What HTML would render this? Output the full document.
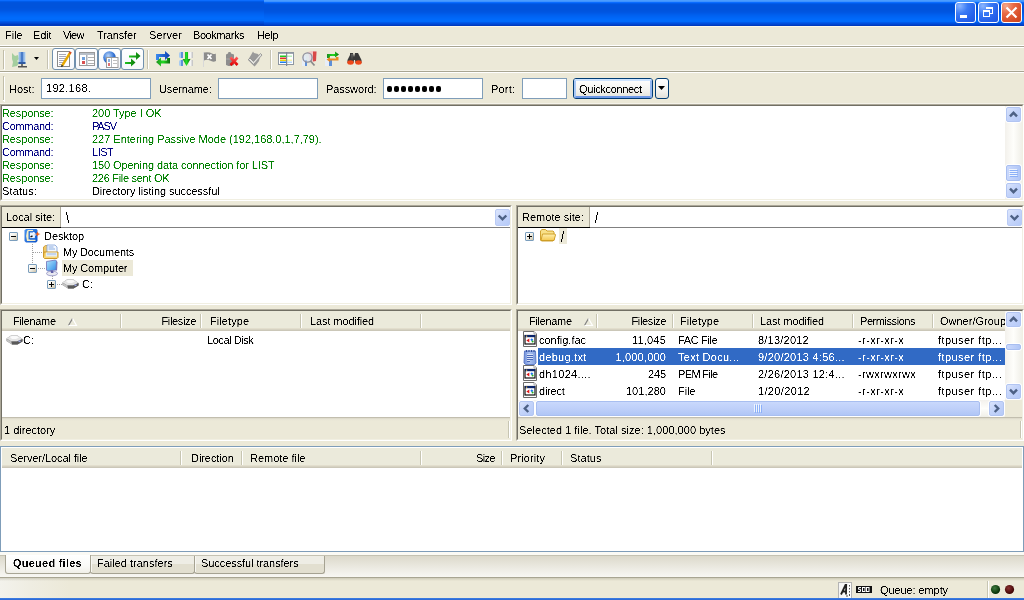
<!DOCTYPE html>
<html><head><meta charset="utf-8"><style>
*{box-sizing:border-box}
html,body{margin:0;padding:0}
body{width:1024px;height:600px;overflow:hidden;position:relative;background:#ECE9D8;font-family:"Liberation Sans",sans-serif;font-size:11px;color:#000;line-height:13px}
.a{position:absolute}
.t{position:absolute;white-space:pre;line-height:13px;filter:url(#crisp)}
.hdrsep{position:absolute;width:2px;border-left:1px solid #C7C5B2;border-right:1px solid #fff}
svg{position:absolute;overflow:visible}
</style></head><body>
<svg width="0" height="0" style="position:absolute"><filter id="crisp" x="0" y="0" width="100%" height="100%"><feComponentTransfer><feFuncA type="table" tableValues="0 0 1 1"/></feComponentTransfer></filter></svg>
<div class="a" style="left:0px;top:0px;width:1024px;height:26px;background:linear-gradient(#4A9CFF 0px,#4A9CFF 1px,#3D92FF 1px,#3D92FF 2px,#0A6CFF 2px,#0A6CFF 3px,#005CEB 3px,#005CEB 4px,#0054DE 4px,#0054DE 5px,#0053DC 5px,#0053DC 6px,#0053DC 6px,#0053DC 7px,#0053DC 7px,#0053DC 8px,#0053DC 8px,#0053DC 9px,#0053DC 9px,#0053DC 10px,#0054DE 10px,#0054DE 11px,#0055E0 11px,#0055E0 12px,#0057E3 12px,#0057E3 13px,#005AE8 13px,#005AE8 14px,#005EEC 14px,#005EEC 15px,#0061F0 15px,#0061F0 16px,#0063F4 16px,#0063F4 17px,#0066F6 17px,#0066F6 18px,#0068F9 18px,#0068F9 19px,#006AFB 19px,#006AFB 20px,#006BFC 20px,#006BFC 21px,#006AFA 21px,#006AFA 22px,#005AEA 22px,#005AEA 23px,#004FDD 23px,#004FDD 24px,#0046D0 24px,#0046D0 25px,#003BBE 25px,#003BBE 26px)"></div>
<div class="a" style="left:0px;top:0px;width:264px;height:26px;background:linear-gradient(#0A6CFF 0px,#0A6CFF 1px,#005CEB 1px,#005CEB 2px,#0054DE 2px,#0054DE 3px,#0053DC 3px,#0053DC 4px,#0053DC 4px,#0053DC 5px,#0053DC 5px,#0053DC 6px,#0053DC 6px,#0053DC 7px,#0053DC 7px,#0053DC 8px,#0054DE 8px,#0054DE 9px,#0055E0 9px,#0055E0 10px,#0057E3 10px,#0057E3 11px,#005AE8 11px,#005AE8 12px,#005EEC 12px,#005EEC 13px,#0061F0 13px,#0061F0 14px,#0063F4 14px,#0063F4 15px,#0066F6 15px,#0066F6 16px,#0068F9 16px,#0068F9 17px,#006AFB 17px,#006AFB 18px,#006BFC 18px,#006BFC 19px,#006AFA 19px,#006AFA 20px,#006AFA 20px,#006AFA 21px,#005AEA 21px,#005AEA 22px,#004FDD 22px,#004FDD 23px,#0046D0 23px,#0046D0 24px,#003BBE 24px,#003BBE 25px)"></div>
<div class="a" style="left:955px;top:2px;width:21px;height:21px;border:1px solid #fff;border-radius:3px;background:radial-gradient(circle at 20% 15%,#8CB6FF 0,#3B7BF5 35%,#2662EB 70%,#1E56E0 100%)"></div>
<div class="a" style="left:978px;top:2px;width:21px;height:21px;border:1px solid #fff;border-radius:3px;background:radial-gradient(circle at 20% 15%,#8CB6FF 0,#3B7BF5 35%,#2662EB 70%,#1E56E0 100%)"></div>
<div class="a" style="left:1001px;top:2px;width:21px;height:21px;border:1px solid #fff;border-radius:3px;background:radial-gradient(circle at 20% 15%,#F4A88B 0,#E86A45 35%,#D8502A 70%,#C8441F 100%)"></div>
<div class="a" style="left:960px;top:15px;width:7px;height:3px;background:#fff"></div>
<div class="a" style="left:986px;top:7px;width:7px;height:2px;background:#fff"></div>
<div class="a" style="left:992px;top:7px;width:1px;height:7px;background:#fff"></div>
<div class="a" style="left:990px;top:13px;width:3px;height:1px;background:#fff"></div>
<div class="a" style="left:983px;top:10px;width:7px;height:7px;border:1px solid #fff;border-top-width:2px;background:transparent"></div>
<svg style="left:1001px;top:2px" width="21" height="21"><path d="M5.5 5.5 L15.5 15.5 M15.5 5.5 L5.5 15.5" stroke="#fff" stroke-width="2.2"/></svg>
<div class="a" style="left:0px;top:26px;width:1024px;height:1px;background:#FBF8EA"></div>
<div class="t" style="left:5px;top:29px;;letter-spacing:-0.08px">File</div>
<div class="t" style="left:33px;top:29px;;letter-spacing:-0.17px">Edit</div>
<div class="t" style="left:63px;top:29px;;letter-spacing:-0.75px">View</div>
<div class="t" style="left:97px;top:29px;;letter-spacing:-0.14px">Transfer</div>
<div class="t" style="left:149px;top:29px;;letter-spacing:0.1px">Server</div>
<div class="t" style="left:193px;top:29px;;letter-spacing:-0.44px">Bookmarks</div>
<div class="t" style="left:257px;top:29px;;letter-spacing:-0.33px">Help</div>
<div class="a" style="left:0px;top:45px;width:1024px;height:1px;background:#fff"></div>
<div class="a" style="left:0px;top:46px;width:1024px;height:1px;background:#A8A592"></div>
<div class="a" style="left:0px;top:47px;width:1024px;height:1px;background:#fff"></div>
<div class="a" style="left:3px;top:50px;width:1px;height:19px;background:#C1BDA8"></div>
<div class="a" style="left:4px;top:51px;width:1px;height:19px;background:#fff"></div>
<div class="a" style="left:0px;top:70px;width:1024px;height:1px;background:#F4F2E8"></div>
<div class="a" style="left:0px;top:71px;width:1024px;height:1px;background:#A8A592"></div>
<div class="a" style="left:0px;top:72px;width:1024px;height:1px;background:#fff"></div>
<div class="a" style="left:47px;top:50px;width:1px;height:19px;background:#C5C2B2"></div>
<div class="a" style="left:48px;top:50px;width:1px;height:19px;background:#fff"></div>
<div class="a" style="left:147px;top:50px;width:1px;height:19px;background:#C5C2B2"></div>
<div class="a" style="left:148px;top:50px;width:1px;height:19px;background:#fff"></div>
<div class="a" style="left:270px;top:50px;width:1px;height:19px;background:#C5C2B2"></div>
<div class="a" style="left:271px;top:50px;width:1px;height:19px;background:#fff"></div>
<div class="a" style="left:52px;top:48px;width:23px;height:22px;border:1px solid #7090AE;border-radius:3px;background:linear-gradient(#fff,#F6F8FB)"></div>
<div class="a" style="left:75px;top:48px;width:23px;height:22px;border:1px solid #7090AE;border-radius:3px;background:linear-gradient(#fff,#F6F8FB)"></div>
<div class="a" style="left:98px;top:48px;width:23px;height:22px;border:1px solid #7090AE;border-radius:3px;background:linear-gradient(#fff,#F6F8FB)"></div>
<div class="a" style="left:121px;top:48px;width:23px;height:22px;border:1px solid #7090AE;border-radius:3px;background:linear-gradient(#fff,#F6F8FB)"></div>

<svg style="left:0;top:0" width="400" height="75">
<defs>
<linearGradient id="gBlueV" x1="0" y1="0" x2="1" y2="0"><stop offset="0" stop-color="#A9CBEF"/><stop offset="0.5" stop-color="#5E8FD6"/><stop offset="1" stop-color="#B8D6F2"/></linearGradient>
<linearGradient id="gGreenA" x1="0" y1="0" x2="1" y2="0"><stop offset="0" stop-color="#22C622"/><stop offset="1" stop-color="#0A7A0A"/></linearGradient>
<linearGradient id="gGreenB" x1="0" y1="0" x2="1" y2="0"><stop offset="0" stop-color="#1E8A1E"/><stop offset="0.5" stop-color="#22DD22"/><stop offset="1" stop-color="#0B6A0B"/></linearGradient>
<linearGradient id="gBlueA" x1="0" y1="0" x2="1" y2="0"><stop offset="0" stop-color="#3C8CF0"/><stop offset="1" stop-color="#0A3CB0"/></linearGradient>
<radialGradient id="gGlobe" cx="0.4" cy="0.35" r="0.7"><stop offset="0" stop-color="#B8D4F8"/><stop offset="0.6" stop-color="#3C7AD8"/><stop offset="1" stop-color="#1546A8"/></radialGradient>
<linearGradient id="gRedX" x1="0" y1="0" x2="0" y2="1"><stop offset="0" stop-color="#FF5A5A"/><stop offset="1" stop-color="#E00000"/></linearGradient>
</defs>
<!-- site manager -->
<path d="M12 53 L15 56 L18 55 L19 59 L17 61 L19 63 L17 66 L12 67 L13 62 L12 59 Z" fill="#9CCB98" opacity="0.9"/>
<rect x="18.5" y="52" width="7" height="12" fill="url(#gBlueV)"/>
<rect x="21" y="52" width="2" height="12" fill="#4A7CC8"/>
<rect x="18.5" y="62" width="7" height="2" fill="#2F5AA0"/>
<rect x="21" y="64" width="2" height="2" fill="#707070"/>
<rect x="18" y="66" width="9" height="1.5" fill="#505050"/>
<path d="M34 57 H39 L36.5 60 Z" fill="#000"/>
<!-- log icon -->
<rect x="57.5" y="51.5" width="12" height="15" fill="#fff" stroke="#8A8A8A"/>
<g stroke="#A8A8B8" stroke-width="1"><path d="M59 54.5 H66 M59 56.5 H66 M59 58.5 H66 M59 60.5 H65 M59 62.5 H64 M59 64.5 H63"/></g>
<path d="M62 66 L70 53" stroke="#E8A800" stroke-width="2.4"/>
<path d="M69.3 52.2 L71.2 53.4" stroke="#D84A20" stroke-width="2"/>
<path d="M61.5 66.8 L62.4 65.2" stroke="#333" stroke-width="1.5"/>
<!-- local tree icon -->
<rect x="79.5" y="52.5" width="15" height="13" fill="#fff" stroke="#9A9A9A"/>
<rect x="80" y="53" width="14" height="2" fill="#B8BFC8"/>
<rect x="86" y="55" width="1.5" height="10" fill="#A8B0BA"/>
<rect x="82" y="57" width="3" height="3" fill="#6EA0DC"/>
<rect x="82" y="61" width="3" height="3" fill="#D85050"/>
<g stroke="#B0B0B0"><path d="M88 57.5 H94 M88 60.5 H94 M88 63.5 H94"/></g>
<!-- remote tree icon -->
<circle cx="109.5" cy="57.5" r="6.3" fill="url(#gGlobe)"/>
<rect x="106.5" y="57.5" width="11.5" height="10" fill="#fff" stroke="#9A9A9A"/>
<rect x="111" y="58" width="1" height="9" fill="#B0B8C0"/>
<rect x="108" y="59" width="2" height="3" fill="#8CB0E0"/>
<rect x="108" y="63" width="2" height="3" fill="#E07070"/>
<g stroke="#C0C0C0"><path d="M113 60.5 H117 M113 63.5 H117"/></g>
<!-- queue arrows -->
<path d="M129 55.5 H136 V52 L140.5 56 L136 60 V57.5 H129 Z" fill="url(#gGreenA)"/>
<path d="M125 62 H131 V58.5 L135.5 62.5 L131 66.5 V64 H125 Z" fill="url(#gGreenA)"/>
<!-- refresh -->
<path d="M156 54 H165 V51 L170 55.5 L165 60 V57 H159 V60 L156 60 Z" fill="url(#gBlueA)"/>
<path d="M170 58 V63.5 H161 V66.5 L156 62 L161 57.5 V60.5 H167 V58 Z" fill="url(#gGreenB)"/>
<!-- process queue -->
<rect x="179" y="52" width="4" height="6" rx="1.5" fill="#A8CCF0"/><rect x="181" y="52" width="2" height="6" fill="#5E90D8"/>
<rect x="179" y="60" width="4" height="6" rx="1.5" fill="#A8CCF0"/><rect x="181" y="60" width="2" height="6" fill="#5E90D8"/>
<rect x="189" y="52" width="4" height="6" rx="1.5" fill="#F4F4F4"/><rect x="191.5" y="52" width="1.5" height="6" fill="#C8C8C8"/>
<rect x="189" y="60" width="4" height="6" rx="1.5" fill="#F4F4F4"/><rect x="191.5" y="60" width="1.5" height="6" fill="#C8C8C8"/>
<path d="M185 52 H188 V59 H190.5 L186.5 66 L182.5 59 H185 Z" fill="url(#gGreenB)"/>
<!-- cancel flag -->
<path d="M203.5 52 V67" stroke="#D8D8D8" stroke-width="1"/>
<path d="M204 52.5 Q209 51.5 212 53.5 Q214.5 54.5 215.8 53.5 L216 61 Q213 62.5 210 60.5 Q207 59 204 60.5 Z" fill="#8C8C8C"/>
<path d="M207.5 54.5 L211.5 59 M211.5 54.5 L207.5 59" stroke="#fff" stroke-width="1.8"/>
<!-- disconnect -->
<path d="M228.5 52 H230.5 L231 53.5 L234 54.5 V65 L231 66 H228.5 L226 65 V54.5 L228 53.5 Z" fill="#8E8E8E"/>
<path d="M226 59 H234" stroke="#A8A8A8"/>
<path d="M230.5 57.5 L237.5 65 M237.5 57.5 L230.5 65" stroke="url(#gRedX)" stroke-width="2.6"/>
<!-- reconnect -->
<path d="M253 51.5 L254 53 L258 54 L260 57 L259 61 L256 65 L254.5 66.5 L250 62 L248 60 L251 55 Z" fill="#9A9A9A"/>
<path d="M248.5 59.5 L253.5 64.5 L262 55 L260.5 53.5 L253.5 61.5 L250 58 Z" fill="#E2E2DE" stroke="#8C8C8C" stroke-width="0.8"/>
<!-- compare -->
<rect x="278.5" y="52.5" width="15" height="12" fill="#fff" stroke="#8E96A0"/>
<rect x="279" y="53" width="14" height="1" fill="#A0A8B2"/>
<rect x="280" y="55.5" width="6" height="1.5" fill="#20C820"/><rect x="287" y="55.5" width="5" height="1.5" fill="#B8ECB8"/>
<rect x="280" y="57.5" width="6" height="1.5" fill="#E03030"/>
<rect x="280" y="59.5" width="6" height="1.5" fill="#F0D000"/><rect x="287" y="59.5" width="5" height="1.5" fill="#F8F0A8"/>
<rect x="280" y="61.5" width="6" height="1.5" fill="#2080E8"/><rect x="287" y="61.5" width="5" height="1.5" fill="#B8D8F8"/>
<rect x="286" y="52" width="1.2" height="14" fill="#7E8894"/>
<!-- search -->
<path d="M308 52 L312 51 L316.5 51.5 L316 61 L310 62 Z" fill="#F0C8C8"/>
<path d="M313 51.5 L316.5 51.5 L316 61 L313 61.5 Z" fill="#D84848"/>
<path d="M302 57 L306 56 L306 66 L302 66 Z" fill="#E8EEF6"/>
<rect x="305" y="60" width="2" height="6" fill="#5E90D8"/>
<circle cx="307.5" cy="57.5" r="4.6" fill="#DCE8F8" fill-opacity="0.6" stroke="#8E8E9A" stroke-width="1.3"/>
<path d="M310.5 61 L314.5 65.5" stroke="#8A8A8A" stroke-width="1.8"/>
<!-- sync -->
<path d="M325 58 L329 56 L330 66 L325 66 Z" fill="#E8EEF8"/>
<rect x="329" y="60" width="3" height="6" fill="#5E90D8"/>
<path d="M327 54 H335 V51.5 L339 54.5 L335 57.5 V56 H330 V58 H327 Z" fill="url(#gGreenB)"/>
<path d="M338.5 57 V60.5 H330 V62 L326.5 59.5 L330 57 V58.5 H336 V57 Z" fill="#E88A20"/>
<!-- binoculars -->
<path d="M350 53 H353 L354 57 L355 53 H358 L359 55 L361.5 60 V63 H355.5 L355 60 H354 L353.5 63 H347.5 V60 L350 55 Z" fill="#3A3A3A"/>
<path d="M351 54 L353 54 L352 60 Z" fill="#606060"/>
<ellipse cx="350.5" cy="62.5" rx="3.2" ry="2.2" fill="#F04818"/>
<ellipse cx="358.5" cy="62.5" rx="3.2" ry="2.2" fill="#F04818"/>
</svg>

<div class="a" style="left:3px;top:76px;width:1px;height:25px;background:#C1BDA8"></div>
<div class="a" style="left:4px;top:77px;width:1px;height:25px;background:#fff"></div>
<div class="a" style="left:3px;top:100px;width:2px;height:1px;background:#fff"></div>
<div class="a" style="left:0px;top:103px;width:1024px;height:1px;background:#F5F3EA"></div>
<div class="t" style="left:9px;top:83px;">Host:</div>
<div class="a" style="left:41px;top:78px;width:110px;height:21px;border:1px solid #7F9DB9;background:#fff"></div>
<div class="t" style="left:46px;top:82px;;letter-spacing:0.29px">192.168.</div>
<div class="t" style="left:159px;top:83px;;letter-spacing:-0.12px">Username:</div>
<div class="a" style="left:218px;top:78px;width:100px;height:21px;border:1px solid #7F9DB9;background:#fff"></div>
<div class="t" style="left:326px;top:83px;;letter-spacing:-0.1px">Password:</div>
<div class="a" style="left:383px;top:78px;width:100px;height:21px;border:1px solid #7F9DB9;background:#fff"></div>
<div class="a" style="left:387px;top:86px;width:5px;height:6px;border-radius:2px;background:#000"></div>
<div class="a" style="left:394px;top:86px;width:5px;height:6px;border-radius:2px;background:#000"></div>
<div class="a" style="left:401px;top:86px;width:5px;height:6px;border-radius:2px;background:#000"></div>
<div class="a" style="left:408px;top:86px;width:5px;height:6px;border-radius:2px;background:#000"></div>
<div class="a" style="left:415px;top:86px;width:5px;height:6px;border-radius:2px;background:#000"></div>
<div class="a" style="left:422px;top:86px;width:5px;height:6px;border-radius:2px;background:#000"></div>
<div class="a" style="left:429px;top:86px;width:5px;height:6px;border-radius:2px;background:#000"></div>
<div class="a" style="left:436px;top:86px;width:5px;height:6px;border-radius:2px;background:#000"></div>
<div class="t" style="left:491px;top:83px;;letter-spacing:0.2px">Port:</div>
<div class="a" style="left:522px;top:78px;width:45px;height:21px;border:1px solid #7F9DB9;background:#fff"></div>
<div class="a" style="left:573px;top:78px;width:80px;height:21px;border:1px solid #003C74;border-radius:3px;background:linear-gradient(#FFFFFF,#F3F3EF 60%,#E2E1DA)"></div>
<div class="a" style="left:574px;top:79px;width:78px;height:19px;border:2px solid #B9D3F8;border-radius:2px;border-top-color:#CEE4FF;border-bottom-color:#6D98E6;border-right-color:#95B8F0;border-left-color:#A9C8F5"></div>
<div class="t" style="left:579px;top:83px;;letter-spacing:-0.33px">Quickconnect</div>
<div class="a" style="left:655px;top:78px;width:14px;height:21px;border:1px solid #003C74;border-radius:3px;background:linear-gradient(#FFFFFF,#F3F3EF 60%,#E2E1DA)"></div>
<svg style="left:658px;top:86px" width="8" height="5"><path d="M0 0 H7 L3.5 4 Z" fill="#000"/></svg>
<div class="a" style="left:0px;top:104px;width:1024px;height:97px;border-top:1px solid #ACA899;border-left:1px solid #ACA899;border-right:1px solid #fff;border-bottom:1px solid #fff"></div>
<div class="a" style="left:1px;top:105px;width:1022px;height:95px;border-top:1px solid #716F64;border-left:1px solid #716F64;border-right:1px solid #F1EFE2;border-bottom:1px solid #F1EFE2;background:#fff"></div>
<div class="t" style="left:2px;top:107px;color:#008000;letter-spacing:-0.12px">Response:</div>
<div class="t" style="left:92px;top:107px;color:#008000;letter-spacing:-0.05px">200 Type I OK</div>
<div class="t" style="left:2px;top:120px;color:#000080;letter-spacing:-0.31px">Command:</div>
<div class="t" style="left:92px;top:120px;color:#000080;letter-spacing:-1.17px">PASV</div>
<div class="t" style="left:2px;top:133px;color:#008000;letter-spacing:-0.12px">Response:</div>
<div class="t" style="left:92px;top:133px;color:#008000;letter-spacing:-0.02px">227 Entering Passive Mode (192,168,0,1,7,79).</div>
<div class="t" style="left:2px;top:146px;color:#000080;letter-spacing:-0.31px">Command:</div>
<div class="t" style="left:92px;top:146px;color:#000080;letter-spacing:-0.47px">LIST</div>
<div class="t" style="left:2px;top:159px;color:#008000;letter-spacing:-0.12px">Response:</div>
<div class="t" style="left:92px;top:159px;color:#008000;letter-spacing:-0.09px">150 Opening data connection for LIST</div>
<div class="t" style="left:2px;top:172px;color:#008000;letter-spacing:-0.12px">Response:</div>
<div class="t" style="left:92px;top:172px;color:#008000;letter-spacing:-0.29px">226 File sent OK</div>
<div class="t" style="left:2px;top:185px;color:#000;letter-spacing:0.13px">Status:</div>
<div class="t" style="left:92px;top:185px;color:#000;letter-spacing:-0.07px">Directory listing successful</div>
<div class="a" style="left:1005px;top:106px;width:17px;height:93px;background:linear-gradient(90deg,#F3F1EC,#FEFEFB 50%,#F0EFE8)"></div>
<div class="a" style="left:1005px;top:106px;width:17px;height:17px;border:1px solid #fff;border-radius:3px;background:#fff"></div><div class="a" style="left:1006px;top:107px;width:15px;height:15px;border:1px solid #B2C5F2;border-radius:2px;background:linear-gradient(135deg,#DAE4FC 0%,#C4D4FA 45%,#B6CAF8 100%)"></div><svg style="left:0;top:0" width="1" height="1"><path d="M1010.0 116.3 L1013.5 112.8 L1017.0 116.3" stroke="#4D6185" stroke-width="2.4" fill="none"/></svg>
<div class="a" style="left:1005px;top:164px;width:17px;height:18px;border:1px solid #fff;border-radius:3px;background:#fff"></div><div class="a" style="left:1006px;top:165px;width:15px;height:16px;border:1px solid #A8BEF0;border-radius:2px;background:linear-gradient(90deg,#C9D8FC,#BCCEF9 60%,#B0C6F6)"></div><div class="a" style="left:1009px;top:169px;width:8px;height:1px;background:#EEF4FE"></div><div class="a" style="left:1010px;top:170px;width:8px;height:1px;background:#8CB0F8"></div><div class="a" style="left:1009px;top:171px;width:8px;height:1px;background:#EEF4FE"></div><div class="a" style="left:1010px;top:172px;width:8px;height:1px;background:#8CB0F8"></div><div class="a" style="left:1009px;top:173px;width:8px;height:1px;background:#EEF4FE"></div><div class="a" style="left:1010px;top:174px;width:8px;height:1px;background:#8CB0F8"></div><div class="a" style="left:1009px;top:175px;width:8px;height:1px;background:#EEF4FE"></div><div class="a" style="left:1010px;top:176px;width:8px;height:1px;background:#8CB0F8"></div>
<div class="a" style="left:1005px;top:182px;width:17px;height:17px;border:1px solid #fff;border-radius:3px;background:#fff"></div><div class="a" style="left:1006px;top:183px;width:15px;height:15px;border:1px solid #B2C5F2;border-radius:2px;background:linear-gradient(135deg,#DAE4FC 0%,#C4D4FA 45%,#B6CAF8 100%)"></div><svg style="left:0;top:0" width="1" height="1"><path d="M1010.0 188.7 L1013.5 192.2 L1017.0 188.7" stroke="#4D6185" stroke-width="2.4" fill="none"/></svg>
<div class="a" style="left:0px;top:205px;width:512px;height:100px;border-top:1px solid #ACA899;border-left:1px solid #ACA899;border-right:1px solid #fff;border-bottom:1px solid #fff"></div>
<div class="a" style="left:1px;top:206px;width:510px;height:98px;border-top:1px solid #716F64;border-left:1px solid #716F64;border-right:1px solid #F1EFE2;border-bottom:1px solid #F1EFE2;background:#fff"></div>
<div class="a" style="left:2px;top:207px;width:59px;height:20px;background:#ECE9D8;border-right:1px solid #ACA899"></div>
<div class="a" style="left:2px;top:227px;width:59px;height:1px;background:#000"></div>
<div class="a" style="left:61px;top:227px;width:449px;height:1px;background:#808080"></div>
<div class="t" style="left:6px;top:211px;;letter-spacing:-0.05px">Local site:</div>
<div class="a" style="left:66px;top:212px;width:1px;height:3px;background:#000"></div>
<div class="a" style="left:67px;top:215px;width:1px;height:5px;background:#000"></div>
<div class="a" style="left:68px;top:220px;width:1px;height:3px;background:#000"></div>
<div class="a" style="left:495px;top:209px;width:15px;height:17px;border:1px solid #BACBF5;border-radius:2px;background:linear-gradient(135deg,#DCE6FD 0%,#C6D5FA 50%,#B5CAF8 100%)"></div><svg style="left:0;top:0" width="1" height="1"><path d="M498.7 215.5 L502.5 219.3 L506.3 215.5" stroke="#4D6185" stroke-width="2.4" fill="none"/></svg>
<div class="a" style="left:516px;top:205px;width:508px;height:100px;border-top:1px solid #ACA899;border-left:1px solid #ACA899;border-right:1px solid #fff;border-bottom:1px solid #fff"></div>
<div class="a" style="left:517px;top:206px;width:506px;height:98px;border-top:1px solid #716F64;border-left:1px solid #716F64;border-right:1px solid #F1EFE2;border-bottom:1px solid #F1EFE2;background:#fff"></div>
<div class="a" style="left:518px;top:207px;width:72px;height:20px;background:#ECE9D8;border-right:1px solid #ACA899"></div>
<div class="a" style="left:518px;top:227px;width:72px;height:1px;background:#000"></div>
<div class="a" style="left:590px;top:227px;width:432px;height:1px;background:#808080"></div>
<div class="t" style="left:522px;top:211px;;letter-spacing:0.02px">Remote site:</div>
<div class="a" style="left:597px;top:212px;width:1px;height:3px;background:#000"></div>
<div class="a" style="left:596px;top:215px;width:1px;height:5px;background:#000"></div>
<div class="a" style="left:595px;top:220px;width:1px;height:3px;background:#000"></div>
<div class="a" style="left:1007px;top:209px;width:15px;height:17px;border:1px solid #BACBF5;border-radius:2px;background:linear-gradient(135deg,#DCE6FD 0%,#C6D5FA 50%,#B5CAF8 100%)"></div><svg style="left:0;top:0" width="1" height="1"><path d="M1010.7 215.5 L1014.5 219.3 L1018.3 215.5" stroke="#4D6185" stroke-width="2.4" fill="none"/></svg>
<div class="a" style="left:9px;top:232px;width:9px;height:9px;border:1px solid #7B9EBD;border-radius:1px;background:linear-gradient(135deg,#fff 0%,#F4F2EA 45%,#C9C0A8 100%)"></div><div class="a" style="left:11px;top:236px;width:5px;height:1px;background:#000"></div>
<svg style="left:24px;top:228px" width="17" height="16">
<defs><linearGradient id="dk" x1="0" y1="0" x2="1" y2="1"><stop offset="0" stop-color="#4A94F0"/><stop offset="1" stop-color="#0A50C8"/></linearGradient></defs>
<path d="M2 1 H12.5 L13.5 2 V13 L12 14.5 H2 L0.5 13 V2.5 Z" fill="url(#dk)"/>
<path d="M4 2 H9 V4 H6 V11.5 H11.5 V13 H3 Q1.2 8 3 3 Z" fill="#F8F0C8"/>
<rect x="5.2" y="3.8" width="6.3" height="7" fill="#EAF4FE" stroke="#1A68D8" stroke-width="1.3"/>
<path d="M9 4 L12 6.5 L9 9.5" fill="none" stroke="#F4F8FE" stroke-width="1"/>
<path d="M6.5 9 L8.5 7.8" stroke="#101010" stroke-width="1.4"/>
<path d="M13.5 3.5 L14.5 5.5 L16.5 6 L14.5 6.8 L13.5 8.5 L12.8 6.8 L11 6 L12.8 5.3 Z" fill="#F06018"/>
</svg>
<div class="t" style="left:44px;top:230px;;letter-spacing:-0.03px">Desktop</div>
<div class="a" style="left:32px;top:244px;width:1px;height:24px;background:repeating-linear-gradient(#A0A0A0 0,#A0A0A0 1px,transparent 1px,transparent 2px)"></div>
<div class="a" style="left:33px;top:252px;width:10px;height:1px;background:repeating-linear-gradient(90deg,#A0A0A0 0,#A0A0A0 1px,transparent 1px,transparent 2px)"></div>
<svg style="left:43px;top:244px" width="16" height="15">
<path d="M0.5 3 L2.5 1.5 H5 V12.5 H0.5 Z" fill="#F0C868" stroke="#C8901C" stroke-width="0.8"/>
<path d="M4 1 H12 L14 3 V9 H4 Z" fill="#F4F8FE" stroke="#7E9ED8" stroke-width="0.8"/>
<path d="M5.5 3 H10.5 M5.5 5 H12" stroke="#7EA4E0" stroke-width="0.9"/>
<path d="M1 8 H15 V13.5 L14 14.5 H1.5 L0.5 13.5 Z" fill="#F8D878" stroke="#C8901C" stroke-width="0.9"/>
<rect x="3" y="8.5" width="11" height="4" fill="#E4ECF4"/>
<path d="M4 10 H13" stroke="#9CB8E4" stroke-width="0.9"/>
</svg>
<div class="t" style="left:63px;top:246px;;letter-spacing:-0.2px">My Documents</div>
<div class="a" style="left:28px;top:264px;width:9px;height:9px;border:1px solid #7B9EBD;border-radius:1px;background:linear-gradient(135deg,#fff 0%,#F4F2EA 45%,#C9C0A8 100%)"></div><div class="a" style="left:30px;top:268px;width:5px;height:1px;background:#000"></div>
<div class="a" style="left:38px;top:268px;width:8px;height:1px;background:repeating-linear-gradient(90deg,#A0A0A0 0,#A0A0A0 1px,transparent 1px,transparent 2px)"></div>
<div class="a" style="left:62px;top:260px;width:71px;height:16px;background:#ECE9D8"></div>
<svg style="left:45px;top:259px" width="14" height="18">
<defs><linearGradient id="mcs" x1="0" y1="0" x2="1" y2="1"><stop offset="0" stop-color="#B4E4FC"/><stop offset="1" stop-color="#2C8CE8"/></linearGradient></defs>
<path d="M1.5 2.5 L10.5 1 L11.5 2 L11 11 L2.5 12 L1.5 11 Z" fill="url(#mcs)" stroke="#7070B8" stroke-width="0.8"/>
<path d="M11.5 2 L12.5 3 L12 12 L11 11" fill="#6E6EB0"/>
<ellipse cx="7" cy="14.5" rx="5.5" ry="2.3" fill="#E8E8F0" stroke="#9090C0" stroke-width="0.8"/>
<path d="M5.5 11.5 L8 11.5 L8.5 14 L6 14 Z" fill="#6060A8"/>
</svg>
<div class="t" style="left:63px;top:262px;;letter-spacing:-0.15px">My Computer</div>
<div class="a" style="left:52px;top:276px;width:1px;height:8px;background:repeating-linear-gradient(#A0A0A0 0,#A0A0A0 1px,transparent 1px,transparent 2px)"></div>
<div class="a" style="left:47px;top:280px;width:9px;height:9px;border:1px solid #7B9EBD;border-radius:1px;background:linear-gradient(135deg,#fff 0%,#F4F2EA 45%,#C9C0A8 100%)"></div><div class="a" style="left:49px;top:284px;width:5px;height:1px;background:#000"></div><div class="a" style="left:51px;top:282px;width:1px;height:5px;background:#000"></div>
<div class="a" style="left:57px;top:284px;width:5px;height:1px;background:repeating-linear-gradient(90deg,#A0A0A0 0,#A0A0A0 1px,transparent 1px,transparent 2px)"></div>
<svg style="left:62px;top:279px" width="17" height="11">
<path d="M0.5 3.5 L5 0.5 H11.5 L16.5 4 V6.5 L11.5 9.5 H6 L0.5 6 Z" fill="#7A7A7A"/>
<path d="M0.5 3.5 L5 0.5 H11.5 L16.5 4 L11 6.5 H5.5 Z" fill="#E4E4E4"/>
<path d="M4 2 L6 1 H10.5 L13 2.5 L10 4 H6 Z" fill="#FAFAFA"/>
<path d="M0.5 3.8 L5.5 6.5 L6 9.5 L0.5 6 Z" fill="#C4C4C4"/>
<path d="M5.5 6.5 H11 L16.5 4 V6.5 L11.5 9.5 H6 Z" fill="#5A5A5A"/>
<rect x="12.5" y="5.5" width="2" height="1.5" fill="#9CA8E8"/>
</svg>
<div class="t" style="left:82px;top:278px;">C:</div>
<div class="a" style="left:525px;top:232px;width:9px;height:9px;border:1px solid #7B9EBD;border-radius:1px;background:linear-gradient(135deg,#fff 0%,#F4F2EA 45%,#C9C0A8 100%)"></div><div class="a" style="left:527px;top:236px;width:5px;height:1px;background:#000"></div><div class="a" style="left:529px;top:234px;width:1px;height:5px;background:#000"></div>
<svg style="left:540px;top:229px" width="16" height="13">
<defs><linearGradient id="fo" x1="0" y1="0" x2="0" y2="1"><stop offset="0" stop-color="#FFF0B0"/><stop offset="1" stop-color="#F4C850"/></linearGradient></defs>
<path d="M0.5 1.8 L2 0.5 H5.5 L7 2 H13 L14 3 V11 L13 12 H1.5 L0.5 11 Z" fill="#F8E088" stroke="#CC9A20" stroke-width="0.9"/>
<path d="M2.5 5 H15 L15.5 6 L14 11.5 H1 Z" fill="url(#fo)" stroke="#CC9A20" stroke-width="0.9"/>
</svg>
<div class="a" style="left:559px;top:228px;width:8px;height:16px;background:#ECE9D8"></div>
<div class="a" style="left:563px;top:231px;width:1px;height:3px;background:#000"></div>
<div class="a" style="left:562px;top:234px;width:1px;height:5px;background:#000"></div>
<div class="a" style="left:561px;top:239px;width:1px;height:3px;background:#000"></div>
<div class="a" style="left:0px;top:309px;width:512px;height:132px;border-top:1px solid #ACA899;border-left:1px solid #ACA899;border-right:1px solid #fff;border-bottom:1px solid #fff"></div>
<div class="a" style="left:1px;top:310px;width:510px;height:130px;border-top:1px solid #716F64;border-left:1px solid #716F64;border-right:1px solid #F1EFE2;border-bottom:1px solid #F1EFE2;background:#fff"></div>
<div class="a" style="left:2px;top:311px;width:508px;height:20px;background:linear-gradient(#EBEADB 0,#EBEADB 17px,#E2DECD 17px,#E2DECD 18px,#D6D2C2 18px,#D6D2C2 19px,#CBC7B8 19px)"></div>
<div class="t" style="left:13px;top:315px;;letter-spacing:-0.31px">Filename</div>
<div class="t" style="left:-4px;top:315px;width:200px;text-align:right;letter-spacing:-0.34px">Filesize</div>
<div class="t" style="left:210px;top:315px;;letter-spacing:0.07px">Filetype</div>
<div class="t" style="left:310px;top:315px;;letter-spacing:-0.1px">Last modified</div>
<div class="a" style="left:120px;top:314px;width:1px;height:14px;background:#C7C5B2"></div>
<div class="a" style="left:121px;top:314px;width:1px;height:14px;background:#fff"></div>
<div class="a" style="left:200px;top:314px;width:1px;height:14px;background:#C7C5B2"></div>
<div class="a" style="left:201px;top:314px;width:1px;height:14px;background:#fff"></div>
<div class="a" style="left:300px;top:314px;width:1px;height:14px;background:#C7C5B2"></div>
<div class="a" style="left:301px;top:314px;width:1px;height:14px;background:#fff"></div>
<div class="a" style="left:420px;top:314px;width:1px;height:14px;background:#C7C5B2"></div>
<div class="a" style="left:421px;top:314px;width:1px;height:14px;background:#fff"></div>
<svg style="left:68px;top:318px" width="9" height="8"><path d="M0.5 7.5 L4.5 0.5" stroke="#808080" stroke-width="1.2"/><path d="M4.5 0.5 L8.5 7.5 H0.5" stroke="#fff" stroke-width="1.2" fill="none"/></svg>
<svg style="left:6px;top:335px" width="17" height="11">
<path d="M0.5 3.5 L5 0.5 H11.5 L16.5 4 V6.5 L11.5 9.5 H6 L0.5 6 Z" fill="#7A7A7A"/>
<path d="M0.5 3.5 L5 0.5 H11.5 L16.5 4 L11 6.5 H5.5 Z" fill="#E4E4E4"/>
<path d="M4 2 L6 1 H10.5 L13 2.5 L10 4 H6 Z" fill="#FAFAFA"/>
<path d="M0.5 3.8 L5.5 6.5 L6 9.5 L0.5 6 Z" fill="#C4C4C4"/>
<path d="M5.5 6.5 H11 L16.5 4 V6.5 L11.5 9.5 H6 Z" fill="#5A5A5A"/>
<rect x="12.5" y="5.5" width="2" height="1.5" fill="#9CA8E8"/>
</svg>
<div class="t" style="left:23px;top:334px;">C:</div>
<div class="t" style="left:207px;top:334px;;letter-spacing:-0.44px">Local Disk</div>
<div class="a" style="left:2px;top:417px;width:508px;height:22px;background:linear-gradient(#ACA899 0,#D8D4C4 1px,#E6E3D4 2px,#ECE9D8 4px,#ECE9D8 100%)"></div>
<div class="a" style="left:508px;top:421px;width:1px;height:17px;background:#C7C5B2"></div>
<div class="a" style="left:509px;top:421px;width:1px;height:17px;background:#fff"></div>
<div class="t" style="left:4px;top:424px;">1 directory</div>
<div class="a" style="left:516px;top:309px;width:508px;height:132px;border-top:1px solid #ACA899;border-left:1px solid #ACA899;border-right:1px solid #fff;border-bottom:1px solid #fff"></div>
<div class="a" style="left:517px;top:310px;width:506px;height:130px;border-top:1px solid #716F64;border-left:1px solid #716F64;border-right:1px solid #F1EFE2;border-bottom:1px solid #F1EFE2;background:#fff"></div>
<div class="a" style="left:518px;top:311px;width:487px;height:20px;background:linear-gradient(#EBEADB 0,#EBEADB 17px,#E2DECD 17px,#E2DECD 18px,#D6D2C2 18px,#D6D2C2 19px,#CBC7B8 19px)"></div>
<div class="t" style="left:529px;top:315px;;letter-spacing:-0.31px">Filename</div>
<div class="t" style="left:466px;top:315px;width:200px;text-align:right;letter-spacing:-0.34px">Filesize</div>
<div class="t" style="left:680px;top:315px;;letter-spacing:0.07px">Filetype</div>
<div class="t" style="left:760px;top:315px;;letter-spacing:-0.1px">Last modified</div>
<div class="t" style="left:860px;top:315px;;letter-spacing:-0.44px">Permissions</div>
<div class="t" style="left:940px;top:315px;">Owner/Group</div>
<div class="a" style="left:596px;top:314px;width:1px;height:14px;background:#C7C5B2"></div>
<div class="a" style="left:597px;top:314px;width:1px;height:14px;background:#fff"></div>
<div class="a" style="left:672px;top:314px;width:1px;height:14px;background:#C7C5B2"></div>
<div class="a" style="left:673px;top:314px;width:1px;height:14px;background:#fff"></div>
<div class="a" style="left:752px;top:314px;width:1px;height:14px;background:#C7C5B2"></div>
<div class="a" style="left:753px;top:314px;width:1px;height:14px;background:#fff"></div>
<div class="a" style="left:852px;top:314px;width:1px;height:14px;background:#C7C5B2"></div>
<div class="a" style="left:853px;top:314px;width:1px;height:14px;background:#fff"></div>
<div class="a" style="left:932px;top:314px;width:1px;height:14px;background:#C7C5B2"></div>
<div class="a" style="left:933px;top:314px;width:1px;height:14px;background:#fff"></div>
<svg style="left:584px;top:318px" width="9" height="8"><path d="M0.5 7.5 L4.5 0.5" stroke="#808080" stroke-width="1.2"/><path d="M4.5 0.5 L8.5 7.5 H0.5" stroke="#fff" stroke-width="1.2" fill="none"/></svg>
<svg style="left:523px;top:331px" width="15" height="17">
<path d="M0.5 0.5 H11 L13.5 3 V15.5 H0.5 Z" fill="#fff" stroke="#6A6A6A"/>
<path d="M11 0.5 V3 H13.5" fill="#fff" stroke="#9A9A9A" stroke-width="0.8"/>
<rect x="2" y="4.5" width="10" height="8.5" fill="#fff" stroke="#101010" stroke-width="1.2"/>
<rect x="2" y="4" width="10" height="2.2" fill="#0A246A"/>
<rect x="3" y="4.6" width="1.2" height="1.2" fill="#F0C040"/>
<path d="M3.3 9.5 L6.3 7.5 V11.5 Z" fill="#E01818"/>
<path d="M8.8 7.3 L10.3 8.8 L8.8 10.3 L7.3 8.8 Z" fill="#1E78F0"/>
<circle cx="9.6" cy="10.6" r="1" fill="#20B020"/>
</svg>
<div class="t" style="left:539px;top:334px;color:#000">config.fac</div>
<div class="t" style="left:466px;top:334px;color:#000;width:200px;text-align:right;letter-spacing:0.2px">11,045</div>
<div class="t" style="left:678px;top:334px;color:#000;letter-spacing:-0.34px">FAC File</div>
<div class="t" style="left:758px;top:334px;color:#000;letter-spacing:0.22px">8/13/2012</div>
<div class="t" style="left:858px;top:334px;color:#000;letter-spacing:0.41px">-r-xr-xr-x</div>
<div class="t" style="left:938px;top:334px;color:#000;letter-spacing:0.44px">ftpuser ftp...</div>
<div class="a" style="left:538px;top:348px;width:467px;height:17px;background:#316AC5"></div>
<svg style="left:523px;top:349px" width="15" height="16">
<defs><linearGradient id="np" x1="0" y1="0" x2="1" y2="0"><stop offset="0" stop-color="#6F8FDA"/><stop offset="0.45" stop-color="#A9C0F0"/><stop offset="1" stop-color="#7E9CDC"/></linearGradient></defs>
<path d="M1.5 2 H12.5 L13 14 L11.5 15.5 H2.5 L1 14 Z" fill="url(#np)" stroke="#5574C4" stroke-width="0.9"/>
<path d="M3.5 1 V3 M6 1 V3 M8.5 1 V3 M11 1 V3" stroke="#304E9C" stroke-width="1.1"/>
<path d="M4 6.5 H10 M4 8.5 H10 M4 10.5 H10 M4 12.5 H7" stroke="#4A68B8" stroke-width="1"/>
<path d="M4 5.5 H10 M4 7.5 H10 M4 9.5 H10 M4 11.5 H7" stroke="#E6EEFC" stroke-width="0.8"/>
</svg>
<div class="t" style="left:539px;top:351px;color:#fff;letter-spacing:0.25px">debug.txt</div>
<div class="t" style="left:466px;top:351px;color:#fff;width:200px;text-align:right;letter-spacing:0.17px">1,000,000</div>
<div class="t" style="left:678px;top:351px;color:#fff;letter-spacing:0.27px">Text Docu...</div>
<div class="t" style="left:758px;top:351px;color:#fff;letter-spacing:0.25px">9/20/2013 4:56...</div>
<div class="t" style="left:858px;top:351px;color:#fff;letter-spacing:0.41px">-r-xr-xr-x</div>
<div class="t" style="left:938px;top:351px;color:#fff;letter-spacing:0.44px">ftpuser ftp...</div>
<svg style="left:523px;top:365px" width="15" height="17">
<path d="M0.5 0.5 H11 L13.5 3 V15.5 H0.5 Z" fill="#fff" stroke="#6A6A6A"/>
<path d="M11 0.5 V3 H13.5" fill="#fff" stroke="#9A9A9A" stroke-width="0.8"/>
<rect x="2" y="4.5" width="10" height="8.5" fill="#fff" stroke="#101010" stroke-width="1.2"/>
<rect x="2" y="4" width="10" height="2.2" fill="#0A246A"/>
<rect x="3" y="4.6" width="1.2" height="1.2" fill="#F0C040"/>
<path d="M3.3 9.5 L6.3 7.5 V11.5 Z" fill="#E01818"/>
<path d="M8.8 7.3 L10.3 8.8 L8.8 10.3 L7.3 8.8 Z" fill="#1E78F0"/>
<circle cx="9.6" cy="10.6" r="1" fill="#20B020"/>
</svg>
<div class="t" style="left:539px;top:368px;color:#000;letter-spacing:0.3px">dh1024....</div>
<div class="t" style="left:466px;top:368px;color:#000;width:200px;text-align:right;letter-spacing:-0.15px">245</div>
<div class="t" style="left:678px;top:368px;color:#000;letter-spacing:-0.63px">PEM File</div>
<div class="t" style="left:758px;top:368px;color:#000;letter-spacing:0.25px">2/26/2013 12:4...</div>
<div class="t" style="left:858px;top:368px;color:#000;letter-spacing:0.32px">-rwxrwxrwx</div>
<div class="t" style="left:938px;top:368px;color:#000;letter-spacing:0.44px">ftpuser ftp...</div>
<svg style="left:523px;top:382px" width="15" height="17">
<path d="M0.5 0.5 H11 L13.5 3 V15.5 H0.5 Z" fill="#fff" stroke="#6A6A6A"/>
<path d="M11 0.5 V3 H13.5" fill="#fff" stroke="#9A9A9A" stroke-width="0.8"/>
<rect x="2" y="4.5" width="10" height="8.5" fill="#fff" stroke="#101010" stroke-width="1.2"/>
<rect x="2" y="4" width="10" height="2.2" fill="#0A246A"/>
<rect x="3" y="4.6" width="1.2" height="1.2" fill="#F0C040"/>
<path d="M3.3 9.5 L6.3 7.5 V11.5 Z" fill="#E01818"/>
<path d="M8.8 7.3 L10.3 8.8 L8.8 10.3 L7.3 8.8 Z" fill="#1E78F0"/>
<circle cx="9.6" cy="10.6" r="1" fill="#20B020"/>
</svg>
<div class="t" style="left:539px;top:385px;color:#000;letter-spacing:-0.24px">direct</div>
<div class="t" style="left:466px;top:385px;color:#000;width:200px;text-align:right;letter-spacing:0.05px">101,280</div>
<div class="t" style="left:678px;top:385px;color:#000;letter-spacing:-0.08px">File</div>
<div class="t" style="left:758px;top:385px;color:#000;letter-spacing:0.35px">1/20/2012</div>
<div class="t" style="left:858px;top:385px;color:#000;letter-spacing:0.41px">-r-xr-xr-x</div>
<div class="t" style="left:938px;top:385px;color:#000;letter-spacing:0.44px">ftpuser ftp...</div>
<div class="a" style="left:1005px;top:311px;width:17px;height:106px;background:linear-gradient(90deg,#F3F1EC,#FEFEFB 50%,#F0EFE8)"></div>
<div class="a" style="left:1005px;top:311px;width:17px;height:17px;border:1px solid #fff;border-radius:3px;background:#fff"></div><div class="a" style="left:1006px;top:312px;width:15px;height:15px;border:1px solid #B2C5F2;border-radius:2px;background:linear-gradient(135deg,#DAE4FC 0%,#C4D4FA 45%,#B6CAF8 100%)"></div><svg style="left:0;top:0" width="1" height="1"><path d="M1010.0 321.3 L1013.5 317.8 L1017.0 321.3" stroke="#4D6185" stroke-width="2.4" fill="none"/></svg>
<div class="a" style="left:1005px;top:343px;width:17px;height:8px;border:1px solid #fff;border-radius:3px;background:#fff"></div><div class="a" style="left:1006px;top:344px;width:15px;height:6px;border:1px solid #A8BEF0;border-radius:2px;background:linear-gradient(90deg,#C9D8FC,#BCCEF9 60%,#B0C6F6)"></div>
<div class="a" style="left:1005px;top:383px;width:17px;height:17px;border:1px solid #fff;border-radius:3px;background:#fff"></div><div class="a" style="left:1006px;top:384px;width:15px;height:15px;border:1px solid #B2C5F2;border-radius:2px;background:linear-gradient(135deg,#DAE4FC 0%,#C4D4FA 45%,#B6CAF8 100%)"></div><svg style="left:0;top:0" width="1" height="1"><path d="M1010.0 389.7 L1013.5 393.2 L1017.0 389.7" stroke="#4D6185" stroke-width="2.4" fill="none"/></svg>
<div class="a" style="left:518px;top:400px;width:487px;height:17px;background:linear-gradient(#F3F1EC,#FEFEFB 50%,#F0EFE8)"></div>
<div class="a" style="left:518px;top:400px;width:17px;height:17px;border:1px solid #fff;border-radius:3px;background:#fff"></div><div class="a" style="left:519px;top:401px;width:15px;height:15px;border:1px solid #B2C5F2;border-radius:2px;background:linear-gradient(135deg,#DAE4FC 0%,#C4D4FA 45%,#B6CAF8 100%)"></div><svg style="left:0;top:0" width="1" height="1"><path d="M528.3 405.0 L524.8 408.5 L528.3 412.0" stroke="#4D6185" stroke-width="2.4" fill="none"/></svg>
<div class="a" style="left:535px;top:400px;width:446px;height:17px;border:1px solid #fff;border-radius:3px;background:#fff"></div><div class="a" style="left:536px;top:401px;width:444px;height:15px;border:1px solid #A8BEF0;border-radius:2px;background:linear-gradient(#C9D8FC,#BCCEF9 60%,#B0C6F6)"></div><div class="a" style="left:754px;top:404px;width:1px;height:8px;background:#EEF4FE"></div><div class="a" style="left:755px;top:405px;width:1px;height:8px;background:#8CB0F8"></div><div class="a" style="left:756px;top:404px;width:1px;height:8px;background:#EEF4FE"></div><div class="a" style="left:757px;top:405px;width:1px;height:8px;background:#8CB0F8"></div><div class="a" style="left:758px;top:404px;width:1px;height:8px;background:#EEF4FE"></div><div class="a" style="left:759px;top:405px;width:1px;height:8px;background:#8CB0F8"></div><div class="a" style="left:760px;top:404px;width:1px;height:8px;background:#EEF4FE"></div><div class="a" style="left:761px;top:405px;width:1px;height:8px;background:#8CB0F8"></div>
<div class="a" style="left:988px;top:400px;width:17px;height:17px;border:1px solid #fff;border-radius:3px;background:#fff"></div><div class="a" style="left:989px;top:401px;width:15px;height:15px;border:1px solid #B2C5F2;border-radius:2px;background:linear-gradient(135deg,#DAE4FC 0%,#C4D4FA 45%,#B6CAF8 100%)"></div><svg style="left:0;top:0" width="1" height="1"><path d="M994.7 405.0 L998.2 408.5 L994.7 412.0" stroke="#4D6185" stroke-width="2.4" fill="none"/></svg>
<div class="a" style="left:1005px;top:400px;width:17px;height:17px;background:#ECE9D8"></div>
<div class="a" style="left:518px;top:417px;width:504px;height:22px;background:linear-gradient(#ACA899 0,#D8D4C4 1px,#E6E3D4 2px,#ECE9D8 4px,#ECE9D8 100%)"></div>
<div class="a" style="left:1020px;top:421px;width:1px;height:17px;background:#C7C5B2"></div>
<div class="a" style="left:1021px;top:421px;width:1px;height:17px;background:#fff"></div>
<div class="t" style="left:519px;top:424px;;letter-spacing:0.03px">Selected 1 file. Total size: 1,000,000 bytes</div>
<div class="a" style="left:0px;top:446px;width:1024px;height:106px;border:1px solid #7F9DB9;background:#fff"></div>
<div class="a" style="left:2px;top:448px;width:1020px;height:20px;background:linear-gradient(#EBEADB 0,#EBEADB 17px,#E2DECD 17px,#E2DECD 18px,#D6D2C2 18px,#D6D2C2 19px,#CBC7B8 19px)"></div>
<div class="a" style="left:180px;top:451px;width:1px;height:14px;background:#C7C5B2"></div>
<div class="a" style="left:181px;top:451px;width:1px;height:14px;background:#fff"></div>
<div class="a" style="left:241px;top:451px;width:1px;height:14px;background:#C7C5B2"></div>
<div class="a" style="left:242px;top:451px;width:1px;height:14px;background:#fff"></div>
<div class="a" style="left:420px;top:451px;width:1px;height:14px;background:#C7C5B2"></div>
<div class="a" style="left:421px;top:451px;width:1px;height:14px;background:#fff"></div>
<div class="a" style="left:501px;top:451px;width:1px;height:14px;background:#C7C5B2"></div>
<div class="a" style="left:502px;top:451px;width:1px;height:14px;background:#fff"></div>
<div class="a" style="left:561px;top:451px;width:1px;height:14px;background:#C7C5B2"></div>
<div class="a" style="left:562px;top:451px;width:1px;height:14px;background:#fff"></div>
<div class="a" style="left:711px;top:451px;width:1px;height:14px;background:#C7C5B2"></div>
<div class="a" style="left:712px;top:451px;width:1px;height:14px;background:#fff"></div>
<div class="t" style="left:10px;top:452px;;letter-spacing:-0.08px">Server/Local file</div>
<div class="t" style="left:191px;top:452px;;letter-spacing:-0.06px">Direction</div>
<div class="t" style="left:250px;top:452px;;letter-spacing:-0.02px">Remote file</div>
<div class="t" style="left:295px;top:452px;width:200px;text-align:right;letter-spacing:-0.6px">Size</div>
<div class="t" style="left:510px;top:452px;;letter-spacing:0.1px">Priority</div>
<div class="t" style="left:570px;top:452px;;letter-spacing:0.04px">Status</div>
<div class="a" style="left:0px;top:552px;width:1024px;height:25px;background:linear-gradient(#FBFAF5 0,#FBFAF5 3px,#C5C2B2 3px,#C5C2B2 4px,#DCD9CB 4px,#F4F3EE 22px,#F8F7F3 25px)"></div>
<div class="a" style="left:0px;top:577px;width:1024px;height:1px;background:#A8A592"></div>
<div class="a" style="left:90px;top:556px;width:105px;height:18px;border:1px solid #A5A292;border-top:none;border-radius:0 0 3px 3px;background:linear-gradient(#EEEDE5 0,#EEEDE5 8px,#E2DFD0 8px,#E2DFD0 100%)"></div>
<div class="a" style="left:91px;top:556px;width:1px;height:16px;background:#F8F7F2"></div>
<div class="t" style="left:97px;top:557px;">Failed transfers</div>
<div class="a" style="left:194px;top:556px;width:131px;height:18px;border:1px solid #A5A292;border-top:none;border-radius:0 0 3px 3px;background:linear-gradient(#EEEDE5 0,#EEEDE5 8px,#E2DFD0 8px,#E2DFD0 100%)"></div>
<div class="a" style="left:195px;top:556px;width:1px;height:16px;background:#F8F7F2"></div>
<div class="t" style="left:201px;top:557px;;letter-spacing:-0.07px">Successful transfers</div>
<div class="a" style="left:5px;top:555px;width:86px;height:19px;border:1px solid #A8A595;border-top:none;border-radius:0 0 3px 3px;background:linear-gradient(#FFFFFF,#FAFAF7 60%,#F0EFE8)"></div>
<div class="t" style="left:13px;top:557px;font-weight:bold;letter-spacing:0.2px;letter-spacing:0.24px">Queued files</div>
<div class="a" style="left:0px;top:578px;width:1024px;height:20px;background:linear-gradient(90deg,#F3F2EC 0,#EFEDE2 30px,#ECE9D8 70px)"></div>
<div class="a" style="left:0px;top:578px;width:1024px;height:3px;background:linear-gradient(rgba(150,146,125,0.35),rgba(236,233,216,0))"></div>
<div class="a" style="left:838px;top:582px;width:14px;height:17px;border:1px solid #B4B4B4;background:linear-gradient(90deg,#F4F4F4,#FFFFFF)"></div>
<svg style="left:838px;top:582px" width="14" height="16"><path d="M3 12.5 L7.5 3 L8.2 3 L8 12.5 M4.5 9.5 H8" stroke="#202020" stroke-width="1.8" fill="none"/><path d="M11.5 3 V4.5 M11.5 6 V7.5 M11.5 9 V10.5 M11.5 12 V14 M8 14 H10" stroke="#505050" stroke-width="1"/></svg>
<div class="a" style="left:856px;top:586px;width:16px;height:7px;background:#101010"></div>
<svg style="left:856px;top:586px" width="16" height="7"><path d="M5 1.5 H2.5 V3.3 H4.5 V5.5 H2" stroke="#fff" stroke-width="1" fill="none"/><rect x="6.5" y="1.5" width="2.5" height="4" stroke="#fff" stroke-width="1" fill="none"/><rect x="10.5" y="1.5" width="2.5" height="4" stroke="#fff" stroke-width="1" fill="none"/></svg>
<div class="t" style="left:880px;top:584px;;letter-spacing:-0.09px">Queue: empty</div>
<div class="a" style="left:987px;top:581px;width:1px;height:17px;background:#C7C5B2"></div>
<div class="a" style="left:988px;top:581px;width:1px;height:17px;background:#fff"></div>
<svg style="left:990px;top:584px" width="26" height="11"><defs><radialGradient id="led1" cx="0.4" cy="0.35" r="0.6"><stop offset="0" stop-color="#3E7A3E"/><stop offset="1" stop-color="#063006"/></radialGradient><radialGradient id="led2" cx="0.4" cy="0.35" r="0.6"><stop offset="0" stop-color="#8A3030"/><stop offset="1" stop-color="#400404"/></radialGradient></defs><circle cx="5.5" cy="5.5" r="4.6" fill="url(#led1)"/><circle cx="19.5" cy="5.5" r="4.6" fill="url(#led2)"/></svg>
<div class="a" style="left:0px;top:598px;width:1024px;height:2px;background:linear-gradient(#3D7FE4,#2A64D2)"></div>
</body></html>
